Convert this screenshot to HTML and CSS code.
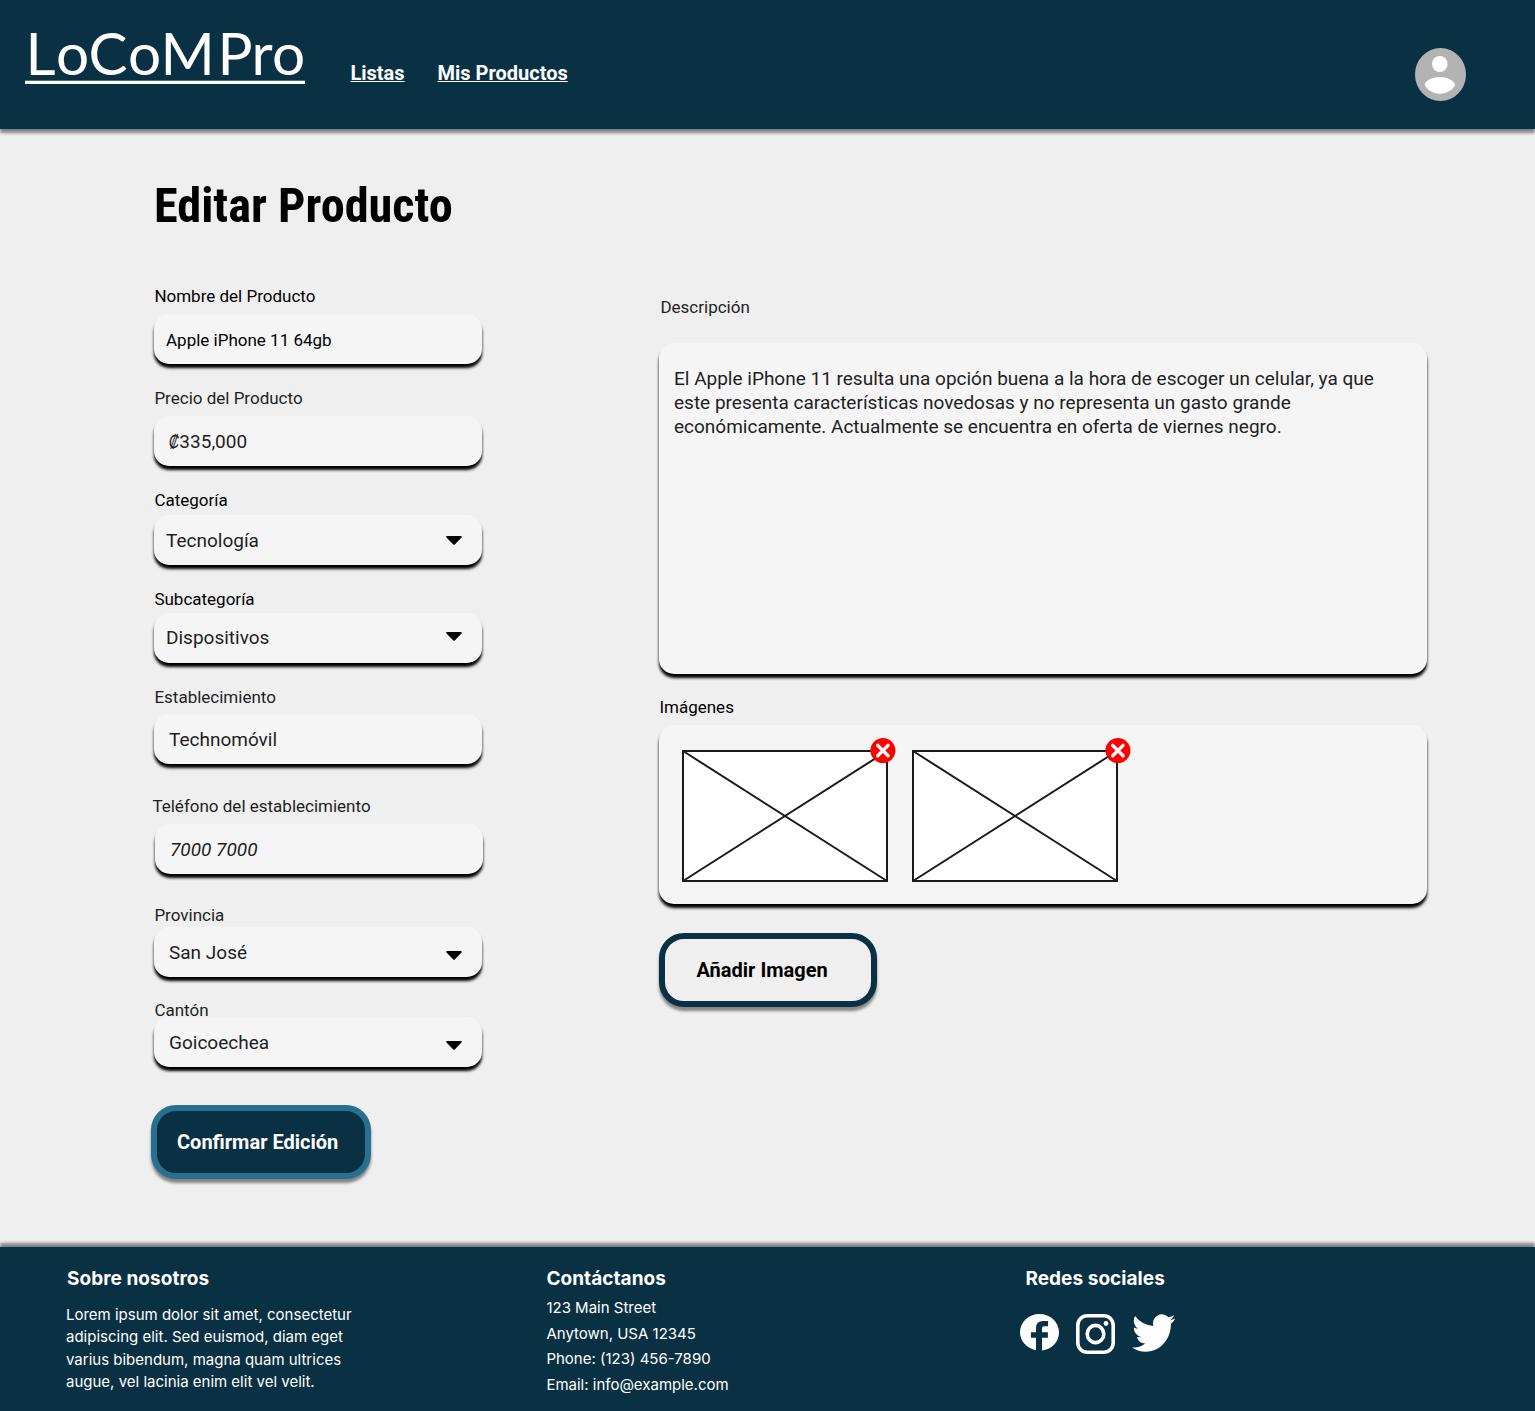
FILE: index.html
```html
<!DOCTYPE html>
<html lang="es">
<head>
<meta charset="utf-8">
<title>LoCoMPro - Editar Producto</title>
<link rel="stylesheet" href="styles.css">
</head>
<body>
<header class="topbar">
  <a class="logo" aria-label="LoCoMPro">
    <svg class="logo-mark" width="280" height="60" viewBox="0 0 280 60"><text class="logo-text" y="49.5" x="0.5 31 63.5 103 135.500 192.500 226.5 247">LoCoMPro</text><rect y="55.7" width="280" height="3.3" fill="#fff"/></svg>
  </a>
  <nav class="nav">
    <a class="nav-link">Listas</a>
    <a class="nav-link">Mis Productos</a>
  </nav>
  <svg class="avatar" width="51" height="53" viewBox="0 0 51 53"><ellipse cx="25.5" cy="26.5" rx="25.5" ry="26.5" fill="#b3b3b3"/><ellipse cx="24.8" cy="16" rx="7.8" ry="8" fill="#fff"/><path d="M9.600 36.500C11 32 18 29 24.900 29S38.500 32 40.200 36.500C39 41 32 45.700 24.900 45.700S11 41 9.600 36.500z" fill="#fff"/></svg>
</header>

<main class="page">
  <h1 class="title">Editar Producto</h1>
  <div class="columns">
    <form class="form">
      <div class="field"><label class="label strong">Nombre del Producto</label><div class="input small">Apple iPhone 11 64gb</div></div>
      <div class="field"><label class="label">Precio del Producto</label><div class="input indent price"><span class="colon">₡</span>335,000</div></div>
      <div class="field category"><label class="label strong">Categoría</label><div class="input">Tecnología<svg class="caret" width="16" height="9" viewBox="0 0 16 9"><path d="M1 0H15Q16.500 .5 15.300 1.800L9 8.200Q8 9.200 7 8.200L.7 1.800Q-.5 .5 1 0z"/></svg></div></div>
      <div class="field subcategory"><label class="label strong">Subcategoría</label><div class="input raised">Dispositivos<svg class="caret" width="16" height="9" viewBox="0 0 16 9"><path d="M1 0H15Q16.500 .5 15.300 1.800L9 8.200Q8 9.200 7 8.200L.7 1.800Q-.5 .5 1 0z"/></svg></div></div>
      <div class="field store"><label class="label">Establecimiento</label><div class="input indent">Technomóvil</div></div>
      <div class="field phone"><label class="label">Teléfono del establecimiento</label><div class="input indent placeholder">7000 7000</div></div>
      <div class="field province"><label class="label">Provincia</label><div class="input indent low">San José<svg class="caret" width="16" height="9" viewBox="0 0 16 9"><path d="M1 0H15Q16.500 .5 15.300 1.800L9 8.200Q8 9.200 7 8.200L.7 1.800Q-.5 .5 1 0z"/></svg></div></div>
      <div class="field canton"><label class="label">Cantón</label><div class="input indent low">Goicoechea<svg class="caret" width="16" height="9" viewBox="0 0 16 9"><path d="M1 0H15Q16.500 .5 15.300 1.800L9 8.200Q8 9.200 7 8.200L.7 1.800Q-.5 .5 1 0z"/></svg></div></div>
      <button type="button" class="button primary">Confirmar Edición</button>
    </form>

    <section class="details">
      <label class="label desc-label">Descripción</label>
      <div class="textarea">El Apple iPhone 11 resulta una opción buena a la hora de escoger un celular, ya que<br>este presenta características novedosas y no representa un gasto grande<br>económicamente. Actualmente se encuentra en oferta de viernes negro.</div>
      <label class="label strong images-label">Imágenes</label>
      <div class="gallery">
        <div class="thumb">
          <svg width="206" height="132" viewBox="0 0 206 132"><path d="M1 1H205V131H1zM1 1L205 131M205 1L1 131" fill="#fff" stroke="#1a1a1a" stroke-width="2"/></svg>
          <svg class="remove inset" width="26" height="26" viewBox="0 0 26 26"><circle cx="12.900" cy="12.600" r="12.500" fill="#f00"/><path d="M7.700 7.400L18.100 17.800M18.100 7.400L7.700 17.800" stroke="#fff" stroke-width="3.400" stroke-linecap="round"/></svg>
        </div>
        <div class="thumb">
          <svg width="206" height="132" viewBox="0 0 206 132"><path d="M1 1H205V131H1zM1 1L205 131M205 1L1 131" fill="#fff" stroke="#1a1a1a" stroke-width="2"/></svg>
          <svg class="remove" width="26" height="26" viewBox="0 0 26 26"><circle cx="12.900" cy="12.600" r="12.500" fill="#f00"/><path d="M7.700 7.400L18.100 17.800M18.100 7.400L7.700 17.800" stroke="#fff" stroke-width="3.400" stroke-linecap="round"/></svg>
        </div>
      </div>
      <button type="button" class="button outline">Añadir Imagen</button>
    </section>
  </div>
</main>

<footer class="footer">
  <section class="about">
    <h2 class="foot-title">Sobre nosotros</h2>
    <p class="about-text">Lorem ipsum dolor sit amet, consectetur<br>adipiscing elit. Sed euismod, diam eget<br>varius bibendum, magna quam ultrices<br>augue, vel lacinia enim elit vel velit.</p>
  </section>
  <section class="contact">
    <h2 class="foot-title">Contáctanos</h2>
    <p class="contact-text">123 Main Street<br>Anytown, USA 12345<br>Phone: (123) 456-7890<br>Email: info@example.com</p>
  </section>
  <section class="social">
    <h2 class="foot-title">Redes sociales</h2>
    <div class="icons">
      <svg width="39" height="36.500" viewBox="2 2 20 20" preserveAspectRatio="none" fill="#fff"><path d="M22 12c0-5.520-4.480-10-10-10S2 6.480 2 12c0 4.840 3.440 8.870 8.200 9.800V15H7.600v-3h2.600V9.500C10.200 7.300 11.600 5.800 13.800 5.800H16.400v2.900h-2c-.75 0-1.100.45-1.100 1.100V12h3v3h-3v6.950c5.050-.5 8.700-4.760 8.700-9.950z"/></svg>
      <svg width="39" height="40" viewBox="0 0 39 40" fill="none" stroke="#fff" stroke-width="3.600"><rect x="1.800" y="1.800" width="35.400" height="36.400" rx="9.500"/><ellipse cx="19.500" cy="20" rx="8.300" ry="8.600"/><circle cx="30" cy="9.500" r="2.400" fill="#fff" stroke="none"/></svg>
      <svg width="43" height="38" viewBox="0 1.900 15.900 13.200" preserveAspectRatio="none" fill="#fff"><path d="M5.026 15c6.038 0 9.341-5.003 9.341-9.334 0-.14 0-.282-.006-.422A6.685 6.685 0 0 0 16 3.542a6.658 6.658 0 0 1-1.889.518 3.301 3.301 0 0 0 1.447-1.817 6.533 6.533 0 0 1-2.087.793A3.286 3.286 0 0 0 7.875 6.030a9.325 9.325 0 0 1-6.767-3.429 3.289 3.289 0 0 0 1.018 4.382A3.323 3.323 0 0 1 .640 6.575v.045a3.288 3.288 0 0 0 2.632 3.218 3.203 3.203 0 0 1-.865.115 3.230 3.230 0 0 1-.614-.057 3.283 3.283 0 0 0 3.067 2.277A6.588 6.588 0 0 1 .780 13.580a6.320 6.320 0 0 1-.780-.045A9.344 9.344 0 0 0 5.026 15z"/></svg>
    </div>
  </section>
</footer>
</body>
</html>
```
FILE: styles.css
```css
* { box-sizing: border-box; }

body {
  margin: 0;
  height: 1411px;
  display: flex;
  flex-direction: column;
  background: #efefef;
  color: #1e1e1e;
  font-family: Roboto, "Liberation Sans", sans-serif;
}

svg { display: block; }

.topbar {
  height: 129px;
  flex: none;
  display: flex;
  align-items: flex-start;
  padding: 25px 69px 0 25px;
  background: #0a3043;
  box-shadow: 0 4px 3px rgba(0, 0, 0, .45);
}

.logo-mark { overflow: visible; }

.logo-text {
  font-family: Lato, sans-serif;
  font-size: 58.5px;
  fill: #fff;
}

.nav {
  display: flex;
  gap: 33px;
  margin: 36px 0 0 45.4px;
}

.nav-link {
  color: #fff;
  font-size: 20px;
  font-weight: 700;
  line-height: 24px;
  text-decoration: underline;
  text-decoration-thickness: 1px;
}

.avatar { margin: 23px 0 0 auto; }

.page {
  flex: 1;
  padding: 49px 0 0 154px;
}

.title {
  margin: 0;
  width: max-content;
  color: #000;
  font-family: "Roboto Condensed", Roboto, sans-serif;
  font-stretch: 75%;
  font-size: 48.3px;
  font-weight: 700;
  line-height: 56px;
}

.columns {
  display: grid;
  grid-template-columns: 328px 768px;
  column-gap: 177px;
  margin-top: 52px;
}

.form,
.details {
  display: flex;
  flex-direction: column;
  align-items: flex-start;
}

.field {
  width: 328px;
  margin-bottom: 24px;
}

.label {
  display: block;
  height: 20px;
  margin-bottom: 8px;
  padding-left: .4px;
  font-size: 17px;
  line-height: 20px;
  white-space: nowrap;
}

.strong { color: #000; }

.input {
  display: flex;
  justify-content: space-between;
  height: 50px;
  padding: 0 20.500px 0 12px;
  border-radius: 15px;
  background: #f5f5f5;
  box-shadow: 0 4px 3px #000;
  font-size: 19px;
  line-height: 51px;
}

.indent { padding-left: 15px; }
.small { color: #000; font-size: 17px; line-height: 52px; }
.price { justify-content: flex-start; }

.colon {
  margin-right: -3.4px;
  transform: scaleX(.75) skewX(-8deg);
  transform-origin: left center;
}

.placeholder { font-style: italic; }
.caret { margin-top: 21px; }
.raised { line-height: 49px; }
.raised .caret { margin-top: 19px; }
.low .caret { margin-top: 24px; }

.category .label { margin-bottom: 5px; }
.subcategory .label { margin-bottom: 4px; }
.store { margin-bottom: 32px; }
.store .label { margin-bottom: 7px; }
.phone { margin-bottom: 31px; }
.phone .label { margin-left: -2px; }
.phone .input { margin-left: 1px; margin-right: -1px; }
.province { margin-bottom: 23px; }
.province .label { margin-bottom: 2px; }
.canton { margin-bottom: 38px; }
.canton .label { margin-bottom: -3px; }

.button {
  height: 74px;
  border: 6px solid #0a3043;
  border-radius: 25px;
  font: 700 20px/24px Roboto, sans-serif;
  text-align: left;
  white-space: nowrap;
  box-shadow: 0 4px 3px rgba(0, 0, 0, .45);
}

.primary {
  width: 220px;
  margin-left: -3px;
  padding: 0 0 0 20px;
  border-color: #28708f;
  background: #0a3043;
  color: #fff;
}

.outline {
  width: 218px;
  padding: 0 0 0 31.5px;
  background: #efefef;
  color: #000;
}

.desc-label { margin: 11px 0 26px 1px; }

.textarea {
  width: 768px;
  height: 331px;
  padding: 24px 15px;
  border-radius: 15px;
  background: #f5f5f5;
  box-shadow: 0 4px 3px #000;
  font-size: 19px;
  line-height: 24px;
  white-space: nowrap;
}

.images-label { margin-top: 23px; }

.gallery {
  display: flex;
  gap: 24px;
  width: 768px;
  height: 179px;
  margin-bottom: 29px;
  padding: 25px 23px;
  border-radius: 15px;
  background: #f5f5f5;
  box-shadow: 0 4px 3px #000;
}

.thumb { position: relative; }

.remove {
  position: absolute;
  top: -12px;
  right: -13px;
}

.inset { right: -8px; }

.footer {
  height: 164px;
  flex: none;
  display: grid;
  grid-template-columns: 480px 479px 1fr;
  padding: 20px 0 0 66px;
  background: #0a3043;
  color: #fff;
  font-family: Inter, sans-serif;
  box-shadow: 0 -4px 3px rgba(0, 0, 0, .45);
}

.foot-title {
  margin: 0;
  padding-left: 1px;
  font-size: 19px;
  font-weight: 700;
  letter-spacing: .05px;
  line-height: 23px;
}

.contact .foot-title,
.social .foot-title { padding-left: .4px; }

.about-text,
.contact-text {
  margin: 14px 0 0;
  font-size: 15px;
  font-weight: 400;
  line-height: 22.3px;
}

.contact-text {
  margin-top: 5px;
  padding-left: .4px;
  line-height: 25.7px;
}

.icons {
  display: flex;
  gap: 17px;
  margin: 24px 0 0 -5px;
}
```
